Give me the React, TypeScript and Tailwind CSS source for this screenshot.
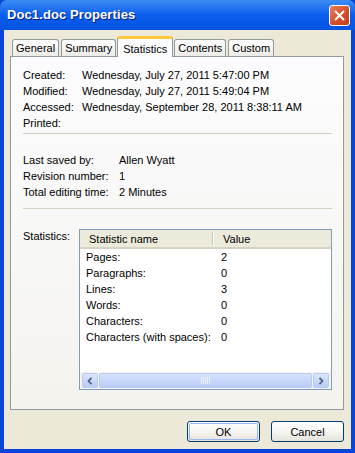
import React from 'react'

const TABS = ['General', 'Summary', 'Statistics', 'Contents', 'Custom']

const DATES = [
  ['Created:', 'Wednesday, July 27, 2011 5:47:00 PM'],
  ['Modified:', 'Wednesday, July 27, 2011 5:49:04 PM'],
  ['Accessed:', 'Wednesday, September 28, 2011 8:38:11 AM'],
  ['Printed:', ''],
]

const INFO = [
  ['Last saved by:', 'Allen Wyatt'],
  ['Revision number:', '1'],
  ['Total editing time:', '2 Minutes'],
]

const STATS = [
  ['Pages:', '2'],
  ['Paragraphs:', '0'],
  ['Lines:', '3'],
  ['Words:', '0'],
  ['Characters:', '0'],
  ['Characters (with spaces):', '0'],
]

function Tab({ label, active }: { label: string; active: boolean }) {
  if (active) {
    return (
      <div className="relative z-10 -mb-px mx-[-1px] h-[21px] px-[5px] flex items-start pt-[2px] rounded-t-[3px] border border-b-0 border-[#919B9C] border-t-[3px] border-t-[#FFC83C] bg-[#FCFCFE] text-black">
        {label}
      </div>
    )
  }
  return (
    <div className="h-[17px] px-[3px] flex items-center rounded-t-[3px] border border-b-0 border-[#919B9C] bg-gradient-to-b from-white to-[#ECEBE6] text-black">
      {label}
    </div>
  )
}

function XpButton({ label, isDefault }: { label: string; isDefault?: boolean }) {
  return (
    <div className="w-[73px] h-[21px] rounded-[3px] border border-[#003C74] bg-gradient-to-b from-white via-[#F6F6F2] to-[#E3E2DA] p-px">
      <div
        className={
          isDefault
            ? 'w-full h-full rounded-[2px] border border-[#98B4F1] flex items-center justify-center'
            : 'w-full h-full flex items-center justify-center'
        }
      >
        {label}
      </div>
    </div>
  )
}

function ScrollArrow({ dir }: { dir: 'left' | 'right' }) {
  return (
    <div className="w-[16px] h-[15px] rounded-[2px] border border-[#B7C9F4] bg-gradient-to-b from-[#DCE6FC] to-[#BACCF6] flex items-center justify-center">
      <svg width="6" height="8" viewBox="0 0 6 8">
        {dir === 'left' ? (
          <path d="M4.5 0.8 L1.5 4 L4.5 7.2" stroke="#4D6185" strokeWidth="1.8" fill="none" />
        ) : (
          <path d="M1.5 0.8 L4.5 4 L1.5 7.2" stroke="#4D6185" strokeWidth="1.8" fill="none" />
        )}
      </svg>
    </div>
  )
}

export default function App() {
  return (
    <div
      className="w-[355px] h-[453px] flex flex-col bg-[#0A45DA] text-[11px] leading-[16px] text-black overflow-hidden"
      style={{ fontFamily: '"Liberation Sans", Arial, sans-serif' }}
    >
      {/* Title bar */}
      <div className="h-[30px] shrink-0 flex items-center justify-between pl-[7px] pr-[5px] rounded-t-[7px] bg-gradient-to-b from-[#3C8CF4] via-[#0A5EEE] to-[#0553E1]">
        <span className="text-white font-bold text-[13px] [text-shadow:1px_1px_0_#0A1E6E] tracking-[0.1px]">
          Doc1.doc Properties
        </span>
        <div className="w-[21px] h-[21px] rounded-[3px] border border-white bg-gradient-to-br from-[#E9805F] via-[#D7512D] to-[#C0401D] flex items-center justify-center">
          <svg width="11" height="11" viewBox="0 0 11 11">
            <path d="M1.5 1.5 L9.5 9.5 M9.5 1.5 L1.5 9.5" stroke="white" strokeWidth="2" strokeLinecap="round" />
          </svg>
        </div>
      </div>

      {/* Body */}
      <div className="mx-[4px] h-[419px] bg-[#ECE9D8] flex flex-col pt-[6px] pl-[6px] pr-[7px]">
        {/* Tabs */}
        <div className="h-[20px] flex items-end gap-[2px] pl-[2px]">
          {TABS.map((t) => (
            <Tab key={t} label={t} active={t === 'Statistics'} />
          ))}
        </div>

        {/* Panel */}
        <div className="h-[354px] border border-[#919B9C] bg-gradient-to-b from-[#FCFCFE] to-[#F4F3EE] pt-[10px] pl-[12px] pr-[11px]">
          {DATES.map(([k, v]) => (
            <div key={k} className="flex h-[16px] items-center">
              <span className="w-[59px]">{k}</span>
              <span>{v}</span>
            </div>
          ))}
          <div className="mt-[2px] h-px bg-[#D0D0BF]" />

          <div className="mt-[18px]">
            {INFO.map(([k, v]) => (
              <div key={k} className="flex h-[16px] items-center">
                <span className="w-[96px]">{k}</span>
                <span>{v}</span>
              </div>
            ))}
          </div>
          <div className="mt-[8px] h-px bg-[#D0D0BF]" />

          <div className="mt-[20px] flex">
            <span className="w-[56px] -mt-[1px]">Statistics:</span>
            <div className="w-[253px] h-[161px] border border-[#7F9DB9] bg-white flex flex-col">
              {/* Header */}
              <div className="h-[19px] flex items-center bg-[#EBEADB] border-b-[2px] border-[#D6D2C2]">
                <div className="w-[133px] pl-[9px] border-r border-[#C7C5B2] h-[13px] flex items-center">
                  Statistic name
                </div>
                <div className="pl-[9px] border-l border-white h-[13px] flex items-center">Value</div>
              </div>
              {/* Rows */}
              <div className="flex-1">
                {STATS.map(([k, v]) => (
                  <div key={k} className="flex h-[16px] items-center">
                    <span className="w-[141px] pl-[6px]">{k}</span>
                    <span>{v}</span>
                  </div>
                ))}
              </div>
              {/* Horizontal scrollbar */}
              <div className="h-[17px] flex items-center gap-[1px] px-[2px] bg-[#F5F4EE]">
                <ScrollArrow dir="left" />
                <div className="flex-1 h-[15px] rounded-[2px] border border-[#B7C9F4] bg-gradient-to-b from-[#D6E2FC] to-[#BACCF6] flex items-center justify-center">
                  <svg width="9" height="7" viewBox="0 0 9 7">
                    <path d="M0.5 0 V7 M2.5 0 V7 M4.5 0 V7 M6.5 0 V7 M8.5 0 V7" stroke="#EEF3FE" strokeWidth="1" />
                  </svg>
                </div>
                <ScrollArrow dir="right" />
              </div>
            </div>
          </div>
        </div>

        {/* Buttons */}
        <div className="mt-[11px] flex justify-end gap-[11px]">
          <XpButton label="OK" isDefault />
          <XpButton label="Cancel" />
        </div>
      </div>
      <div className="flex-1" />
    </div>
  )
}
